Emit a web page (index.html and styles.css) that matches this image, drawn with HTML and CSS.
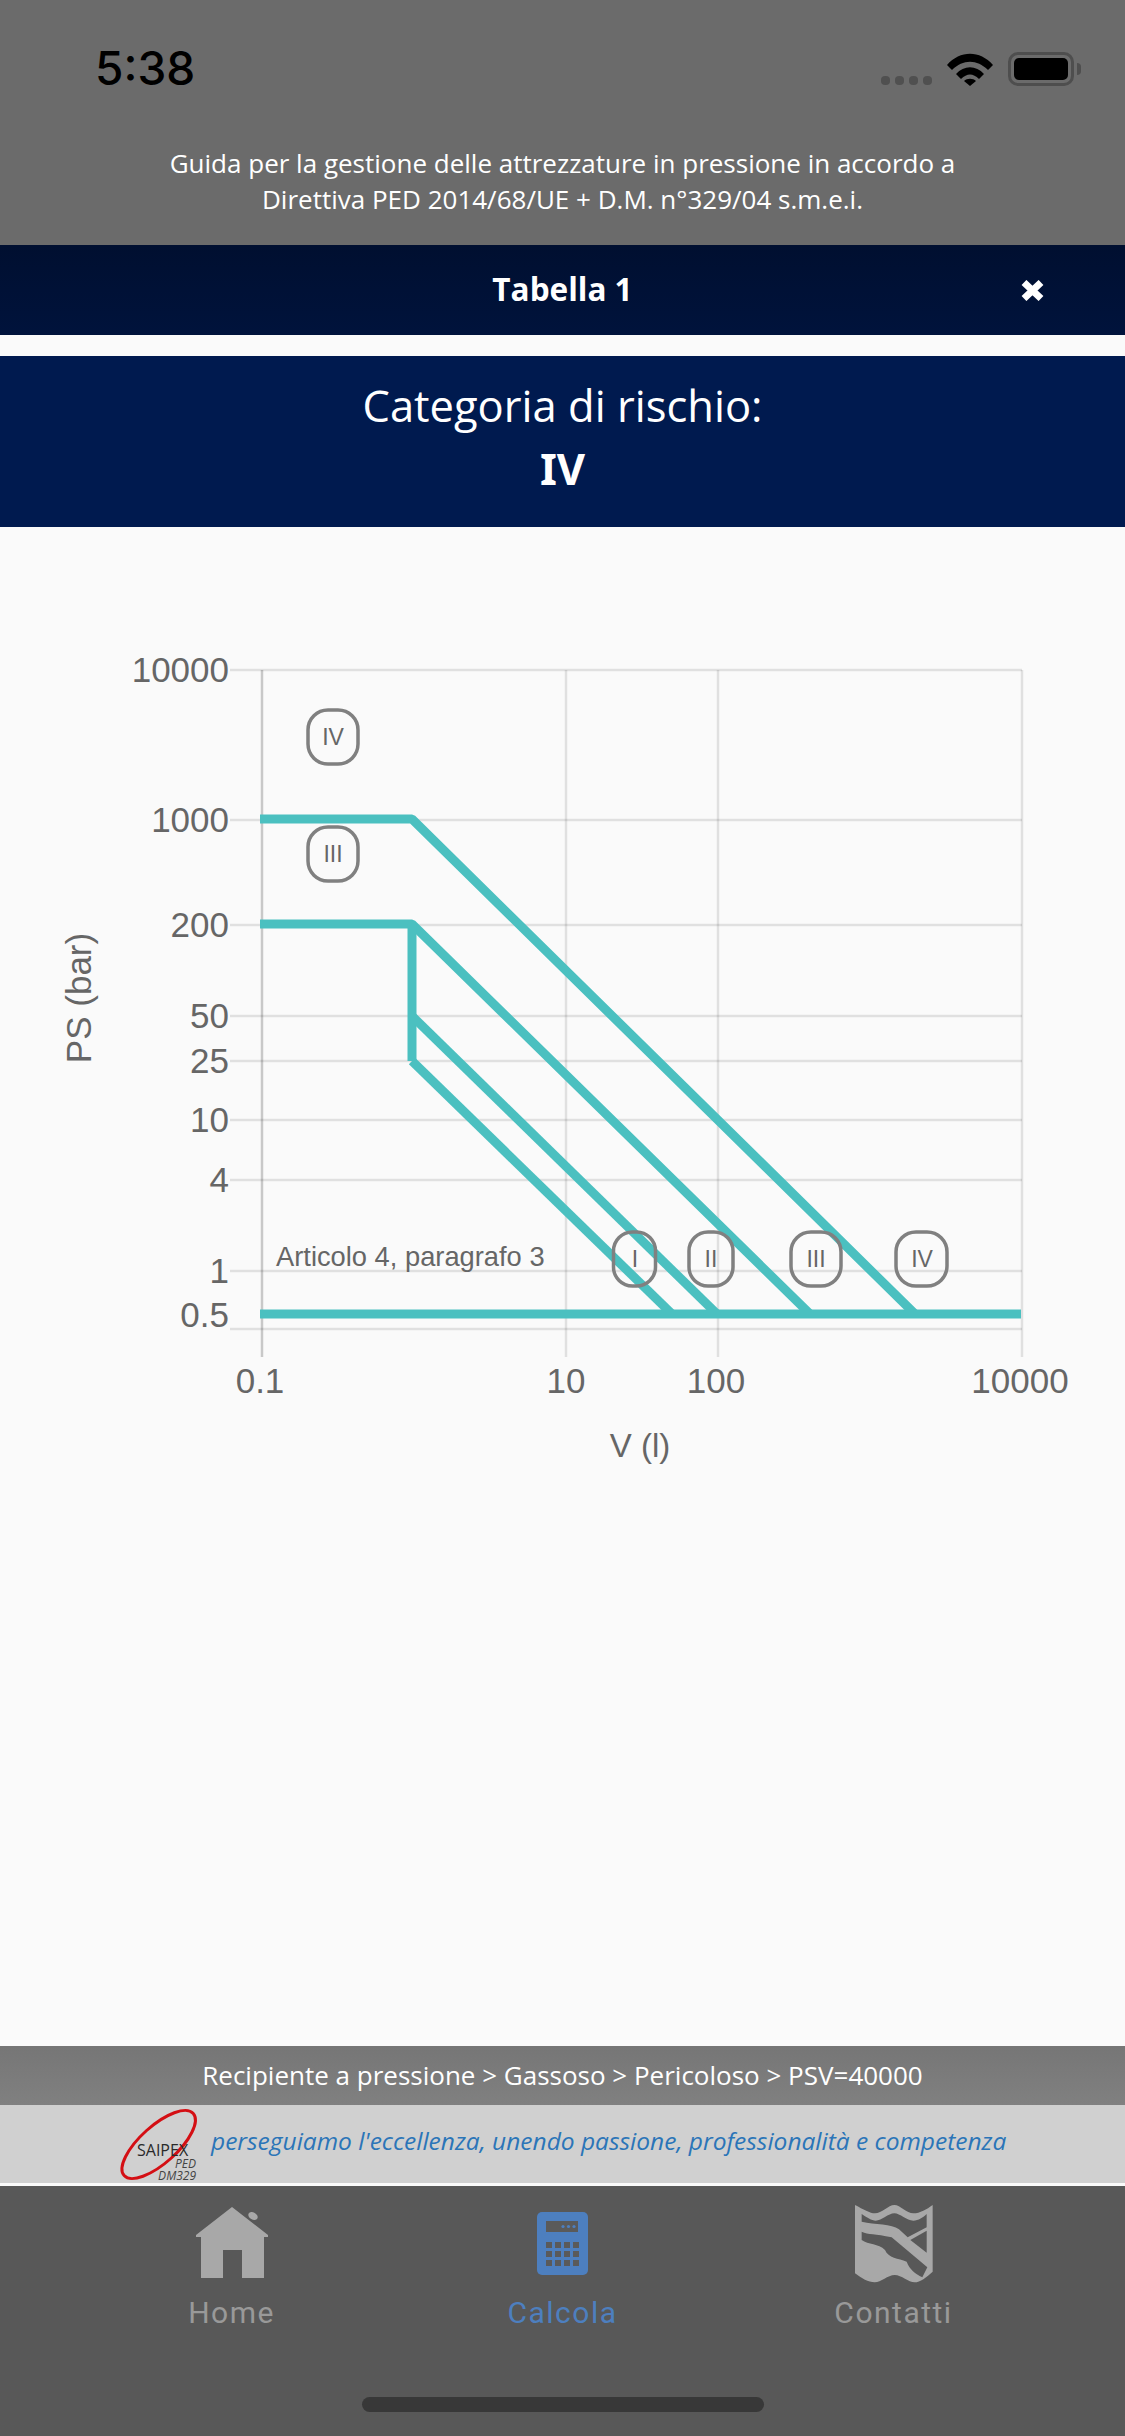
FILE: index.html
```html
<!DOCTYPE html>
<html lang="it">
<head>
    <meta charset="UTF-8" />
    <meta name="viewport" content="width=device-width, initial-scale=1" />
    <title>Tabella 1</title>
    <link rel="stylesheet" href="styles.css">
</head>
<body>
    <header class="top_area">
        <div class="status_bar">
            <div class="time">5:38</div>
            <div class="status_icons">
                <div class="signal"><span></span><span></span><span></span><span></span></div>
                <svg class="wifi" width="46" height="33" viewBox="0 0 46 33">
                    <path d="M0 12 C13 -3 33 -3 46 12 L41 17 C30 6 16 6 5 17 Z" />
                    <path d="M9 21 C17 12 29 12 37 21 L32 26 C26 20 20 20 14 26 Z" />
                    <path d="M17 28 C20 25 26 25 29 28 L23 33 Z" />
                </svg>
                <div class="battery"><div class="battery_level"></div></div>
            </div>
        </div>
        <p class="app_title">Guida per la gestione delle attrezzature in pressione in accordo a<br>Direttiva PED 2014/68/UE + D.M. n°329/04 s.m.e.i.</p>
    </header>

    <div class="modal_bar">
        <div></div>
        <div class="modal_title">Tabella 1</div>
        <svg class="close_icon" width="23" height="21" viewBox="0 0 23 21">
            <path d="M3 2.5 L20 18.5 M20 2.5 L3 18.5" />
        </svg>
    </div>

    <div class="category">
        <div class="category_label">Categoria di rischio:</div>
        <div class="category_value">IV</div>
    </div>

    <main class="chart_area">
        <svg class="chart" width="1125" height="950" viewBox="0 527 1125 950">
            <g class="grid_h">
                <line x1="230" x2="1022" y1="670" y2="670" />
                <line x1="230" x2="1022" y1="820" y2="820" />
                <line x1="230" x2="1022" y1="925" y2="925" />
                <line x1="230" x2="1022" y1="1016" y2="1016" />
                <line x1="230" x2="1022" y1="1061" y2="1061" />
                <line x1="230" x2="1022" y1="1120" y2="1120" />
                <line x1="230" x2="1022" y1="1180" y2="1180" />
                <line x1="230" x2="1022" y1="1271" y2="1271" />
                <line x1="230" x2="1022" y1="1329" y2="1329" />
            </g>
            <g class="grid_v">
                <line class="axis_line" x1="262" x2="262" y1="670" y2="1357" />
                <line x1="566" x2="566" y1="670" y2="1357" />
                <line x1="718" x2="718" y1="670" y2="1357" />
                <line class="last_line" x1="1022" x2="1022" y1="670" y2="1357" />
            </g>

            <g class="tick_y">
                <text x="229" y="682">10000</text>
                <text x="229" y="832">1000</text>
                <text x="229" y="937">200</text>
                <text x="229" y="1028">50</text>
                <text x="229" y="1073">25</text>
                <text x="229" y="1132">10</text>
                <text x="229" y="1192">4</text>
                <text x="229" y="1283">1</text>
                <text x="229" y="1327">0.5</text>
            </g>
            <g class="tick_x">
                <text x="260" y="1393">0.1</text>
                <text x="566" y="1393">10</text>
                <text x="716" y="1393">100</text>
                <text x="1020" y="1393">10000</text>
            </g>
            <text class="axis_title" transform="translate(91 998) rotate(-90)">PS (bar)</text>
            <text class="axis_title axis_title_x" x="640" y="1457">V (l)</text>

            <g class="curves">
                <polyline points="260,819 412,819 915,1314" />
                <polyline points="260,924 412,924 810,1314" />
                <polyline points="412,924 412,1061" />
                <polyline points="412,1016 717,1314" />
                <polyline points="412,1061 672,1314" />
                <polyline points="260,1314 1021,1314" />
            </g>

            <text class="note" x="276" y="1266">Articolo 4, paragrafo 3</text>

            <g class="zone">
                <rect x="308" y="710" width="50" height="54" rx="20" />
                <text x="333" y="745">IV</text>
                <rect x="308" y="827" width="50" height="54" rx="20" />
                <text x="333" y="862">III</text>
                <rect x="613.5" y="1232" width="42" height="54" rx="19" />
                <text x="635" y="1267">I</text>
                <rect x="689" y="1232" width="44" height="54" rx="19" />
                <text x="711" y="1267">II</text>
                <rect x="791" y="1232" width="50" height="54" rx="20" />
                <text x="816" y="1267">III</text>
                <rect x="896" y="1232" width="51" height="54" rx="20" />
                <text x="922" y="1267">IV</text>
            </g>
        </svg>
    </main>

    <div class="breadcrumb">Recipiente a pressione &gt; Gassoso &gt; Pericoloso &gt; PSV=40000</div>

    <div class="slogan">
        <svg class="logo" width="80" height="74" viewBox="0 0 80 74">
            <ellipse class="logo_ring" cx="39.7" cy="37.5" rx="46.5" ry="18.5" transform="rotate(-42 39.7 37.5)" />
            <text class="logo_name" x="18" y="49">SAIPEX</text>
            <text class="logo_sub" x="77" y="61">PED</text>
            <text class="logo_sub" x="77" y="73">DM329</text>
        </svg>
        <span class="slogan_text">perseguiamo l'eccellenza, unendo passione, professionalità e competenza</span>
    </div>

    <nav class="tab_bar">
        <div class="tab">
            <svg class="tab_icon" width="72" height="80" viewBox="0 -3 72 80">
                <path d="M36 0 L72 28 L72 30 L68 30 L68 71 L46 71 L46 43 L27 43 L27 71 L5 71 L5 30 L0 30 L0 28 Z" />
                <ellipse cx="57" cy="9" rx="5" ry="3.5" transform="rotate(30 57 9)" />
            </svg>
            <div class="tab_label">Home</div>
        </div>
        <div class="tab tab_active">
            <svg class="tab_icon" width="72" height="80" viewBox="0 -3 72 80">
                <rect x="10" y="5" width="51" height="63" rx="5" />
                <rect class="calc_cut" x="19" y="14" width="32" height="11" />
                <circle cx="36" cy="19.5" r="1.6" /><circle cx="41.5" cy="19.5" r="1.6" /><circle cx="47" cy="19.5" r="1.6" />
                <g class="calc_cut">
                    <rect x="19" y="35" width="6" height="6" /><rect x="28" y="35" width="6" height="6" /><rect x="37" y="35" width="6" height="6" /><rect x="46" y="35" width="6" height="6" />
                    <rect x="19" y="44" width="6" height="6" /><rect x="28" y="44" width="6" height="6" /><rect x="37" y="44" width="6" height="6" /><rect x="46" y="44" width="6" height="6" />
                    <rect x="19" y="53" width="6" height="6" /><rect x="28" y="53" width="6" height="6" /><rect x="37" y="53" width="6" height="6" /><rect x="46" y="53" width="6" height="6" />
                </g>
            </svg>
            <div class="tab_label">Calcola</div>
        </div>
        <div class="tab">
            <svg class="tab_icon" width="78" height="80" viewBox="60 42 234 240">
                <path d="M60 45 C85 58 105 70 120 70 C140 70 160 45 178 45 C196 45 215 70 235 70 C255 70 275 58 293 45 V245 C275 262 255 277 239 277 C220 277 200 255 179 255 C158 255 138 277 119 277 C100 277 80 265 60 250 Z" />
                <path class="map_cut" d="M80 72 C95 82 110 92 122 92 C140 92 160 70 178 70 C195 70 215 92 235 92 C250 92 265 82 275 72 V112 L218 142 L192 118 C170 100 120 105 80 95 Z" />
                <path class="map_cut" d="M275 122 L226 150 L275 188 Z" />
                <path class="map_cut" d="M80 125 C100 135 120 130 170 142 L277 232 L262 262 C240 250 225 240 215 215 C190 205 160 205 150 180 C130 160 100 165 80 150 Z" />
            </svg>
            <div class="tab_label">Contatti</div>
        </div>
        <div class="home_indicator"></div>
    </nav>
</body>
</html>
```

FILE: styles.css
```css
body, html {
    margin: 0;
    padding: 0;
    width: 1125px;
    height: 2436px;
    overflow: hidden;
    font-family: "Open Sans", Arial, sans-serif;
    background-color: #fafafa;
}
body {
    display: flex;
    flex-direction: column;
}
.top_area {
    height: 245px;
    box-sizing: border-box;
    background-color: #6b6b6b;
    color: white;
    flex-shrink: 0;
}
.status_bar {
    height: 100px;
    box-sizing: border-box;
    padding: 44px 51px 0 95px;
    display: flex;
    justify-content: space-between;
    align-items: flex-start;
}
.time {
    font-family: Inter, "Liberation Sans", sans-serif;
    font-size: 46px;
    font-weight: 500;
    line-height: 48px;
    color: black;
}
.status_icons {
    display: flex;
    align-items: flex-end;
    margin-top: 8px;
}
.signal {
    display: flex;
    gap: 5px;
    margin-right: 15px;
    margin-bottom: 1px;
}
.signal span {
    width: 9px;
    height: 9px;
    border-radius: 4px;
    background-color: #505050;
}
.wifi {
    fill: black;
    margin-right: 15px;
}
.battery {
    width: 66px;
    height: 34px;
    box-sizing: border-box;
    border: 3px solid #4e4e4e;
    border-radius: 10px;
    padding: 3px;
    position: relative;
}
.battery::after {
    content: "";
    position: absolute;
    right: -10px;
    top: 8px;
    width: 4px;
    height: 12px;
    background-color: #4e4e4e;
    border-radius: 0 4px 4px 0;
}
.battery_level {
    height: 100%;
    background-color: black;
    border-radius: 5px;
}
.app_title {
    margin: 45px 0 0;
    text-align: center;
    font-size: 26px;
    line-height: 36px;
}
.modal_bar {
    height: 90px;
    flex-shrink: 0;
    display: grid;
    grid-template-columns: 1fr auto 1fr;
    align-items: center;
    background: linear-gradient(#000f30, #00133c);
    color: white;
}
.modal_title {
    font-size: 31.5px;
    font-weight: 700;
    margin-bottom: 3px;
}
.close_icon {
    justify-self: end;
    margin-right: 81px;
    fill: none;
    stroke: white;
    stroke-width: 7;
}
.category {
    margin-top: 21px;
    height: 171px;
    flex-shrink: 0;
    box-sizing: border-box;
    padding-top: 19px;
    background-color: #001a4f;
    color: white;
    text-align: center;
    font-size: 43.5px;
    line-height: 62px;
}
.category_value {
    font-family: "Noto Sans", "Open Sans", sans-serif;
    font-weight: 700;
}
.chart_area {
    flex: 1;
    min-height: 0;
}
.chart {
    display: block;
    font-family: "Liberation Sans", Arial, sans-serif;
}
.grid_h line, .grid_v line {
    stroke: rgba(0, 0, 0, 0.1);
    stroke-width: 2.5;
}
.grid_v .axis_line {
    stroke: rgba(0, 0, 0, 0.2);
}
.grid_v .last_line {
    stroke: rgba(0, 0, 0, 0.1);
}
.tick_y text {
    font-size: 35px;
    fill: #666;
    text-anchor: end;
}
.tick_x text {
    font-size: 35px;
    fill: #666;
    text-anchor: middle;
}
.axis_title {
    font-size: 35px;
    fill: #666;
    text-anchor: middle;
}
.axis_title_x {
    font-size: 33px;
}
.curves polyline {
    fill: none;
    stroke: #4bc0c0;
    stroke-width: 9;
    stroke-linejoin: bevel;
}
.note {
    font-size: 27.3px;
    fill: #666;
}
.zone rect {
    fill: none;
    stroke: #808080;
    stroke-width: 3.5;
}
.zone text {
    font-size: 23px;
    fill: #666;
    text-anchor: middle;
}
.breadcrumb {
    height: 59px;
    flex-shrink: 0;
    background: linear-gradient(#767676, #808080);
    color: white;
    text-align: center;
    font-size: 26px;
    line-height: 59px;
}
.slogan {
    height: 78px;
    flex-shrink: 0;
    box-sizing: border-box;
    padding-left: 119px;
    display: flex;
    align-items: center;
    gap: 12px;
    background-color: #d0d0d0;
    color: #2b75b8;
    font-size: 24.5px;
    font-style: italic;
}
.slogan_text {
    margin-bottom: 8px;
}
.logo {
    overflow: visible;
}
.logo_ring {
    fill: none;
    stroke: #d40f14;
    stroke-width: 3;
}
.logo_name {
    font-size: 16px;
    font-style: normal;
    fill: #2a2a2a;
}
.logo_sub {
    font-size: 12px;
    fill: #444;
    text-anchor: end;
}
.tab_bar {
    height: 253px;
    flex-shrink: 0;
    box-sizing: border-box;
    border-top: 3px solid #fafafa;
    padding: 18px 66px 0;
    display: flex;
    background-color: #585858;
    position: relative;
    color: #999;
}
.tab {
    flex: 1;
    display: flex;
    flex-direction: column;
    align-items: center;
    font-family: Roboto, Arial, sans-serif;
}
.tab_icon {
    display: block;
    fill: #a8a8a8;
    filter: blur(0.6px);
}
.tab_active {
    color: #4d7fbf;
}
.tab_active .tab_icon {
    fill: #4d7fbf;
}
.calc_cut {
    fill: #5a5a5a;
}
.map_cut {
    fill: #585858;
}
.tab_label {
    margin-top: 11px;
    font-size: 30px;
    line-height: 36px;
    letter-spacing: 1.5px;
}
.home_indicator {
    position: absolute;
    left: 362px;
    bottom: 24px;
    width: 402px;
    height: 15px;
    border-radius: 8px;
    background-color: #383838;
}
```
